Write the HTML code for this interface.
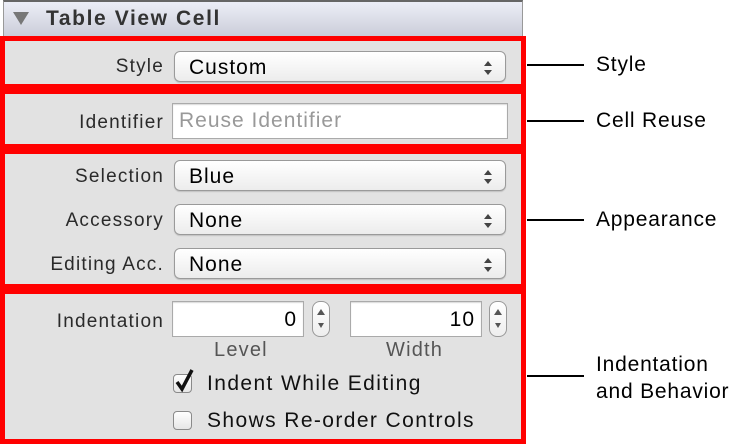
<!DOCTYPE html>
<html><head><style>
body{margin:0;width:736px;height:446px;background:#fff;position:relative;overflow:hidden;font-family:"Liberation Sans",sans-serif;}
.a{position:absolute;}
.lbl{position:absolute;font-size:19px;letter-spacing:1.2px;color:#2a2a2a;text-align:right;width:162px;left:2px;}
.pop{position:absolute;left:174px;width:332px;height:31px;border:1px solid #9a9a9a;border-radius:6px;background:linear-gradient(#fff,#f4f4f4 60%,#ececec);box-shadow:0 1px 1px rgba(0,0,0,.15);font-size:21px;letter-spacing:1px;line-height:31px;box-sizing:border-box;padding-left:14px;color:#000;}
.arr{position:absolute;right:12px;top:8px;width:10px;height:16px;}
.fld{position:absolute;background:#fff;border:1px solid #aaa;box-shadow:inset 0 1px 1px rgba(0,0,0,.15);box-sizing:border-box;font-size:21px;letter-spacing:1px;}
.step{position:absolute;width:18px;height:36px;border:1px solid #999;border-radius:8px;background:linear-gradient(#fff,#eee);box-sizing:border-box;}
.red{position:absolute;left:0;width:516px;border:5px solid #f00;background:#e2e2e2;}
.rl{position:absolute;font-size:21px;letter-spacing:0.8px;color:#000;}
.ln{position:absolute;height:2px;background:#000;left:527px;width:57px;}
.cb{position:absolute;left:173px;width:19px;height:19px;border:1px solid #8a8a8a;border-radius:4px;background:linear-gradient(#fff,#e6e6e6);box-sizing:border-box;}
.ct{position:absolute;left:207px;font-size:21px;letter-spacing:1.4px;color:#111;}
</style></head><body>
<div class="a" style="left:3px;top:0;width:520px;height:36px;background:linear-gradient(#eceef7,#cbcdd9);border-top:2px solid #666;border-left:1px solid #999;border-right:1px solid #999;box-sizing:border-box;"></div>
<svg class="a" style="left:13px;top:12px" width="16" height="14"><polygon points="0,0 16,0 8,13" fill="#777"/></svg>
<div class="a" style="left:46px;top:7px;font-size:21px;letter-spacing:1.6px;font-weight:bold;color:#333">Table View Cell</div>

<div class="red" style="top:36px;height:43px"></div>
<div class="red" style="top:89px;height:50px"></div>
<div class="red" style="top:149px;height:130px"></div>
<div class="red" style="top:289px;height:145px"></div>

<div class="lbl" style="top:56px">Style</div>
<div class="pop" style="top:51px">Custom<svg class="arr" viewBox="0 0 10 16"><polygon points="1,6 9,6 5,1" fill="#444"/><polygon points="1,10 9,10 5,15" fill="#444"/></svg></div>

<div class="lbl" style="top:112px">Identifier</div>
<div class="fld" style="left:172px;top:103px;width:336px;height:36px;color:#999;line-height:34px;padding-left:6px">Reuse Identifier</div>

<div class="lbl" style="top:166px">Selection</div>
<div class="pop" style="top:160px">Blue<svg class="arr" viewBox="0 0 10 16"><polygon points="1,6 9,6 5,1" fill="#444"/><polygon points="1,10 9,10 5,15" fill="#444"/></svg></div>
<div class="lbl" style="top:210px">Accessory</div>
<div class="pop" style="top:204px">None<svg class="arr" viewBox="0 0 10 16"><polygon points="1,6 9,6 5,1" fill="#444"/><polygon points="1,10 9,10 5,15" fill="#444"/></svg></div>
<div class="lbl" style="top:254px">Editing Acc.</div>
<div class="pop" style="top:248px">None<svg class="arr" viewBox="0 0 10 16"><polygon points="1,6 9,6 5,1" fill="#444"/><polygon points="1,10 9,10 5,15" fill="#444"/></svg></div>

<div class="lbl" style="top:311px">Indentation</div>
<div class="fld" style="left:172px;top:301px;width:132px;height:36px;text-align:right;padding-right:6px;line-height:36px">0</div>
<div class="step" style="left:312px;top:301px"><svg width="16" height="34"><polygon points="4,13 12,13 8,7" fill="#555"/><polygon points="5,21 11,21 8,26" fill="#555"/></svg></div>
<div class="fld" style="left:350px;top:301px;width:132px;height:36px;text-align:right;padding-right:6px;line-height:36px">10</div>
<div class="step" style="left:489px;top:301px"><svg width="16" height="34"><polygon points="4,13 12,13 8,7" fill="#555"/><polygon points="5,21 11,21 8,26" fill="#555"/></svg></div>
<div class="a" style="left:214px;top:339px;font-size:20px;letter-spacing:1.2px;color:#555">Level</div>
<div class="a" style="left:386px;top:339px;font-size:20px;letter-spacing:1.2px;color:#555">Width</div>

<div class="cb" style="top:374px"></div>
<svg class="a" style="left:172px;top:366px" width="24" height="28"><path d="M5 16 L10 23 L20 4" stroke="#111" stroke-width="3.5" fill="none"/></svg>
<div class="ct" style="top:372px">Indent While Editing</div>
<div class="cb" style="top:411px"></div>
<div class="ct" style="top:409px">Shows Re-order Controls</div>

<div class="ln" style="top:64px"></div><div class="rl" style="left:596px;top:53px">Style</div>
<div class="ln" style="top:120px"></div><div class="rl" style="left:596px;top:109px">Cell Reuse</div>
<div class="ln" style="top:219px"></div><div class="rl" style="left:596px;top:208px">Appearance</div>
<div class="ln" style="top:375px"></div><div class="rl" style="left:596px;top:351px;line-height:27px">Indentation<br>and Behavior</div>
</body></html>
